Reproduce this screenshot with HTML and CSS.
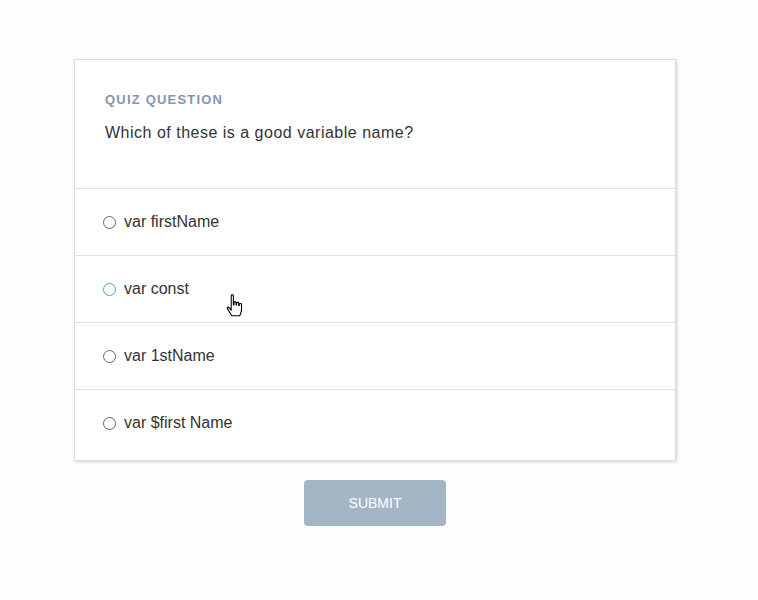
FILE: index.html
```html
<!DOCTYPE html>
<html>
<head>
<meta charset="utf-8">
<link rel="stylesheet" href="styles.css">
</head>
<body>
<div class="page">
  <div class="card">
    <div class="head">
      <div class="label">QUIZ QUESTION</div>
      <div class="question">Which of these is a good variable name?</div>
    </div>
    <div class="opt"><span class="radio"></span><span>var firstName</span></div>
    <div class="opt hover"><span class="radio"></span><span>var const</span>
      <svg class="cursor" width="20" height="26" viewBox="0 0 18 24">
        <path d="M5.5 1.5c0-1 2-1 2 0v8.5h0.5v-2c0-1 2-1 2 0v2h0.5v-1.5c0-1 2-1 2 0v2h0.5v-1c0-1 2-1 2 0v6l-1.5 4.5h-7.5l-4-6.5c-0.6-1 0.6-2 1.5-1l2 2.5z" fill="#fff" stroke="#000" stroke-width="1" stroke-linejoin="round"/>
      </svg>
    </div>
    <div class="opt"><span class="radio"></span><span>var 1stName</span></div>
    <div class="opt last"><span class="radio"></span><span>var $first Name</span></div>
  </div>
  <div class="actions"><button class="submit">SUBMIT</button></div>
</div>
</body>
</html>
```
FILE: styles.css
```css
html, body { margin: 0; padding: 0; background: #fdfdfc; }
body { font-family: "Liberation Sans", Arial, sans-serif; color: #333; }
.page { width: 602px; margin: 59px 0 0 74px; }
.card {
  background: #fff;
  border: 1px solid #dcdcdc;
  box-shadow: 1px 1px 3px rgba(0,0,0,0.18);
}
.head { padding: 32px 30px 45px; border-bottom: 1px solid #dddfe2; }
.label { font-size: 13px; line-height: 16px; font-weight: bold; color: #8496aa; letter-spacing: 1.2px; }
.question { margin-top: 15px; font-size: 16px; line-height: 20px; color: #333; letter-spacing: 0.5px; }
.opt {
  position: relative;
  display: flex; align-items: center; gap: 8px;
  height: 66px; padding-left: 28px;
  font-size: 16px; color: #333;
  border-bottom: 1px solid #dddfe2;
}
.opt.last { border-bottom: none; height: 70px; align-items: flex-start; padding-top: 24px; box-sizing: border-box; }
.radio {
  width: 11px; height: 11px; border-radius: 50%;
  border: 1.5px solid #666;
  flex: none;
}
.opt.last .radio { margin-top: 3px; }
.hover .radio { border-color: #3fa6d4; }
.cursor { position: absolute; left: 150px; top: 38px; }
.actions { display: flex; justify-content: center; margin-top: 19px; }
.submit {
  width: 142px; height: 46px;
  background: #a4b5c5; color: #fff;
  border: none; border-radius: 4px;
  font-family: "Liberation Sans", Arial, sans-serif; font-size: 14px;
}
```
